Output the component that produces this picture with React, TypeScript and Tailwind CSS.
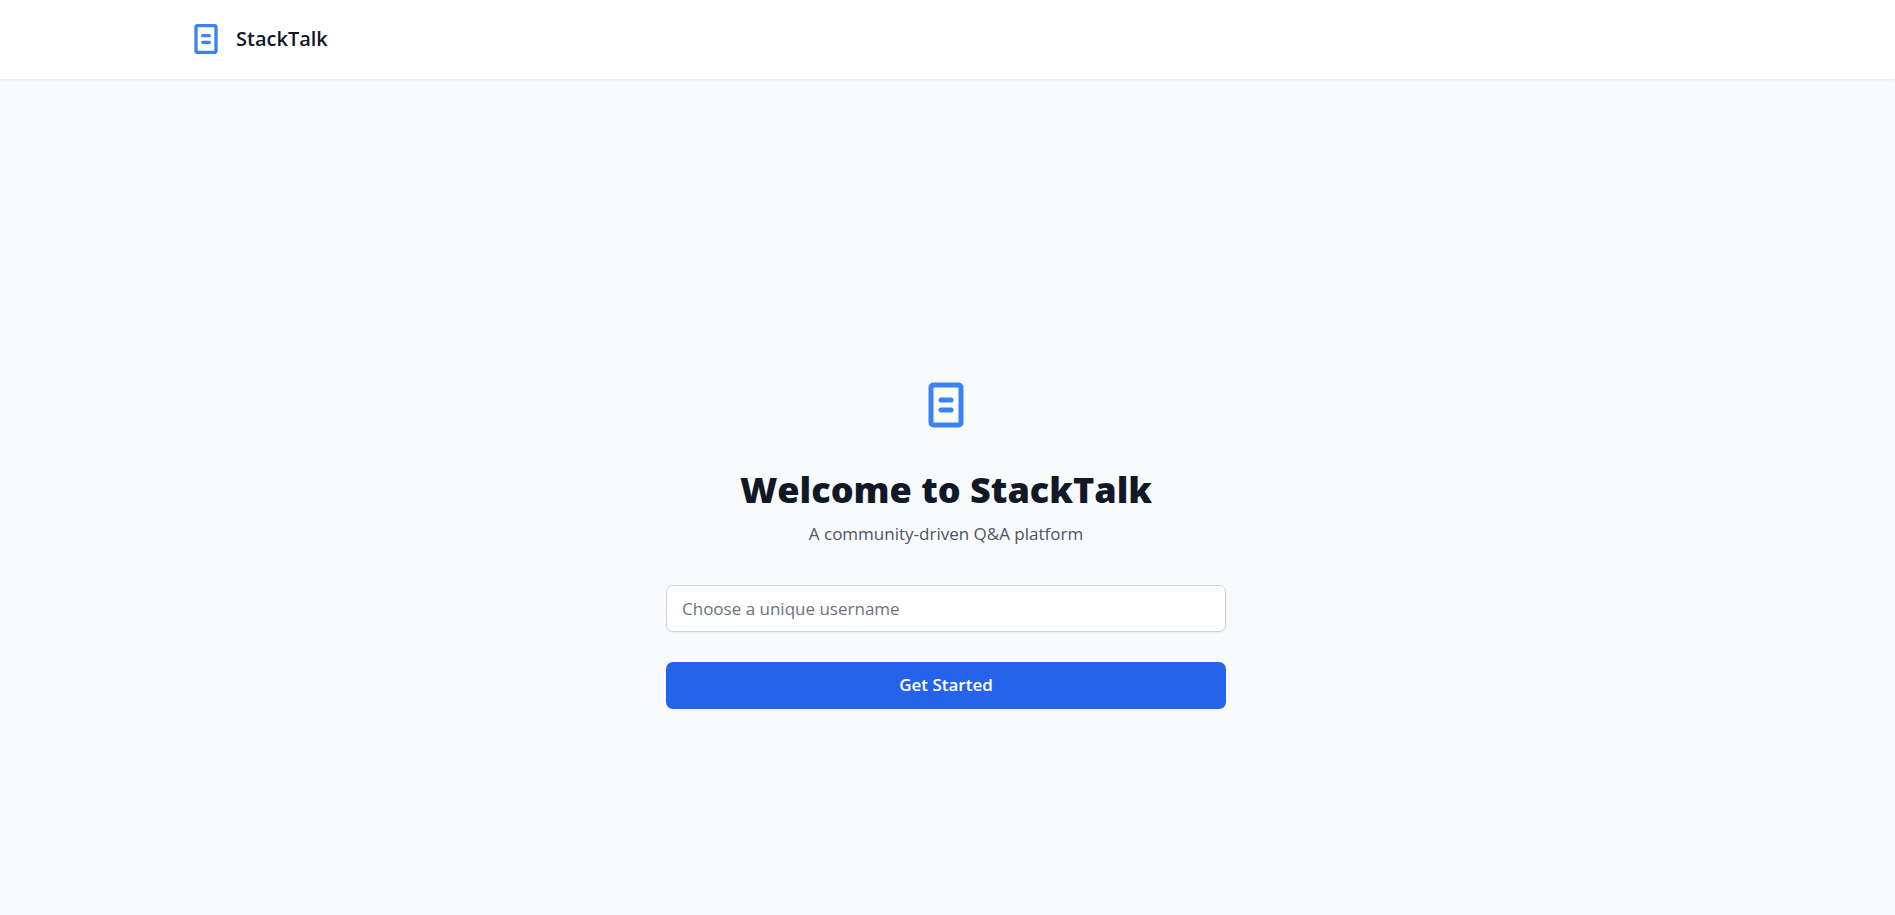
import { useState } from "react";

function LogoIcon({ className }: { className: string }) {
  return (
    <svg
      className={className}
      viewBox="0 0 24 24"
      fill="none"
      stroke="currentColor"
      strokeWidth="2"
      strokeLinecap="round"
      strokeLinejoin="round"
      aria-hidden="true"
    >
      <rect x="6" y="4" width="12" height="16" rx="1" />
      <path d="M10 10h4M10 14h4" />
    </svg>
  );
}

function Header() {
  return (
    <header className="bg-white pr-[3px] pb-px shadow-[0_1px_2px_rgb(0_0_0/0.07)]">
      <div className="mx-auto flex h-[78px] w-full max-w-[1600px] items-center gap-[10px] px-10">
        <LogoIcon className="size-10 text-[#3b82f6]" />
        <span className="text-xl leading-[30px] font-semibold text-[#111827]">StackTalk</span>
      </div>
    </header>
  );
}

function Welcome() {
  const [username, setUsername] = useState("");

  return (
    <main className="flex flex-1 items-center justify-center pt-[89px] pr-[3px]">
      <div className="flex w-full max-w-[560px] flex-col items-center">
        <LogoIcon className="size-[60px] text-[#3b82f6]" />
        <h1 className="mt-8 text-center text-4xl leading-[45px] font-extrabold text-[#111827]">
          Welcome to StackTalk
        </h1>
        <p className="mt-[9px] text-center text-[17px] leading-[25px] text-[#4b5563]">
          A community-driven Q&amp;A platform
        </p>
        <form className="mt-[39px] flex w-full flex-col gap-[30px]" onSubmit={(e) => e.preventDefault()}>
          <input
            type="text"
            aria-label="Username"
            placeholder="Choose a unique username"
            value={username}
            onChange={(e) => setUsername(e.target.value)}
            className="h-[47px] w-full rounded-[7px] border border-[#d1d5db] bg-white px-[15px] text-[17px] text-[#111827] shadow-[0_1px_2px_rgb(0_0_0/0.05)] outline-none placeholder:text-[#6b7280] focus:border-[#3b82f6]"
          />
          <button
            type="submit"
            className="h-[47px] w-full rounded-[7px] bg-[#2563eb] text-[17px] font-semibold text-white hover:bg-[#1d4ed8]"
          >
            Get Started
          </button>
        </form>
      </div>
    </main>
  );
}

export default function App() {
  return (
    <div className="flex min-h-screen flex-col bg-[#f9fafc] font-['Open_Sans','Noto_Sans',sans-serif]">
      <Header />
      <Welcome />
    </div>
  );
}
